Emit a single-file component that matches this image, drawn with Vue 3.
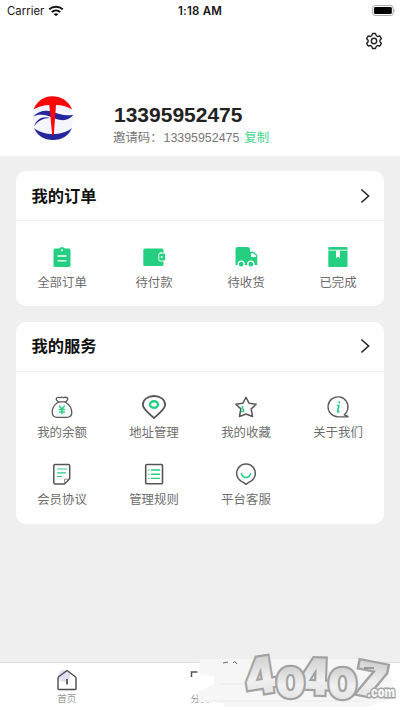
<script setup>
const orders = [
  { icon: 'list', label: '全部订单' },
  { icon: 'wallet', label: '待付款' },
  { icon: 'truck', label: '待收货' },
  { icon: 'box', label: '已完成' },
]
const services = [
  { icon: 'bag', label: '我的余额' },
  { icon: 'pin', label: '地址管理' },
  { icon: 'star', label: '我的收藏' },
  { icon: 'info', label: '关于我们' },
  { icon: 'paper', label: '会员协议' },
  { icon: 'rules', label: '管理规则' },
  { icon: 'smile', label: '平台客服' },
]
const cards = [
  { title: '我的订单', kind: 'orders', items: orders },
  { title: '我的服务', kind: 'services', items: services },
]
</script>

<template>
  <div class="screen">
    <header class="top">
      <div class="status">
        <div class="carrier">
          <span>Carrier</span>
          <svg width="16" height="12" viewBox="0 0 16 12" fill="none" stroke="#111" stroke-width="2">
            <path d="M1.2 4.4C5 .7 11 .7 14.8 4.4" />
            <path d="M3.8 7.1c2.5-2.3 5.9-2.3 8.4 0" />
            <path d="M5.8 9.1c1.3-1.1 3.1-1.1 4.4 0L8 11.3z" fill="#111" stroke="none" />
          </svg>
        </div>
        <span class="time">1:18 AM</span>
        <svg class="battery" width="24" height="12" viewBox="0 0 24 12">
          <rect x=".6" y=".5" width="20.6" height="10" rx="2.6" fill="#fff" stroke="#aaa" />
          <rect x="2" y="1.900" width="17.8" height="7.2" rx="1.4" fill="#000" />
          <path d="M22.2 3.800q1.4 1.7 0 3.4z" fill="#999" />
        </svg>
      </div>
      <div class="tools">
        <svg width="18" height="18" viewBox="0 0 18 18" fill="none" stroke="#222" stroke-width="1.4" stroke-linejoin="round">
          <path d="M7.5 1.5h3l.7 2.1 1.5.9 2.2-.5 1.5 2.6L14.900 8.200v1.600l1.500 1.600-1.500 2.600-2.200-.5-1.500.9-.7 2.100h-3l-.7-2.100-1.500-.9-2.200.5-1.500-2.600 1.500-1.600V8.200L1.600 6.600 3.100 4l2.200.5 1.500-.9z" />
          <circle cx="9" cy="9" r="2.7" />
        </svg>
      </div>
      <div class="profile">
        <svg class="avatar" width="46" height="50" viewBox="0 0 46 50">
          <ellipse cx="23" cy="26" rx="20" ry="21" fill="#f5f5ff" />
          <path d="M3 23.500c6-5.500 12-7 20-4.500 7 2.500 12 4.200 20.500 2.800C39 27.500 33 28.500 25 25.500 17 22 10 20.300 3 23.500z" fill="#26269c" />
          <path d="M4 33.500c3-8 9-10.500 16-8.500-7 .2-12 2.700-16 8.500z" fill="#26269c" />
          <path d="M4 35c10 8 28 8 38 0C38.500 43 32 47 23 47S7.500 43 4 35z" fill="#26269c" />
          <path d="M3.500 16.500C7 7.800 14 3.300 22.500 3.300S38.500 7.800 42.200 16.500C37 13.300 31 12 26 12L23.800 42h-1.600L19.300 12C14 12 8.500 13.500 3.500 16.500z" fill="#f80808" />
        </svg>
        <div class="who">
          <div class="phone">13395952475</div>
          <div class="invite"><span class="key">邀请码：</span><span class="code">13395952475</span><span class="copy">复制</span></div>
        </div>
      </div>
    </header>

    <main class="cards">
      <section v-for="card in cards" :key="card.title" class="card" :class="card.kind">
        <div class="card-head">
          <h2>{{ card.title }}</h2>
          <svg width="10" height="16" viewBox="0 0 10 16" fill="none" stroke="#222" stroke-width="1.5">
            <path d="M1.400 1.500 8.600 8l-7.200 6.500" />
          </svg>
        </div>
        <div class="grid">
          <div v-for="item in card.items" :key="item.label" class="item">
            <svg class="icon" width="24" height="24" viewBox="0 0 24 24" fill="none" stroke-linejoin="round" stroke-linecap="round">
              <template v-if="item.icon === 'list'">
                <path d="M5 3.500h4Q12 .5 15 3.500h4q1.500 0 1.500 1.500v15.500q0 1.500-1.500 1.500H5q-1.500 0-1.500-1.500V5Q3.500 3.500 5 3.500z" fill="#25cf82" />
                <circle cx="12" cy="5.300" r="1" fill="#fff" />
                <path d="M8 11h8M8 15.800h8" stroke="#fff" stroke-width="1.300" />
              </template>
              <template v-else-if="item.icon === 'wallet'">
                <rect x="1.300" y="3.500" width="20.200" height="17.500" rx="1.500" fill="#25cf82" />
                <rect x="16.800" y="8" width="6.700" height="8" rx="1.500" fill="#25cf82" stroke="#fff" />
                <circle cx="19.700" cy="12" r="1" fill="#fff" />
              </template>
              <template v-else-if="item.icon === 'truck'">
                <path d="M3.500 2h10Q16 2 16 4.500v2.200h3.500L23.300 10v10H1.500V4q0-2 2-2z" fill="#25cf82" />
                <path d="M17 8.200h2.200l2.900 2.500V12H17z" fill="#fff" />
                <circle cx="7.200" cy="19.200" r="3" fill="#25cf82" stroke="#fff" stroke-width="1.300" />
                <circle cx="16.800" cy="19.200" r="3" fill="#25cf82" stroke="#fff" stroke-width="1.300" />
              </template>
              <template v-else-if="item.icon === 'box'">
                <rect x="2.300" y="2" width="19.200" height="20" rx="1" fill="#25cf82" />
                <path d="M2 5.200h19.500" stroke="#d8f7e8" stroke-width="1" stroke-linecap="butt" />
                <path d="M10 5.500h4v7.500l-2-1.200-2 1.200z" fill="#fff" />
              </template>
              <g v-else-if="item.icon === 'bag'" stroke="#595959" stroke-width="1.300">
                <path d="M8 6.800Q5 4 7 2.700q2-.8 3.500 0 1.500-1.200 3 0 2.500-1 4 .2 1 1.200-1.500 3.900z" />
                <path d="M8.500 7C3.500 10 2 14 2.200 17.500c.2 3.500 2.500 4.800 5 4.800h9.600c3 0 5-1.500 5-4.800 0-4-2.300-8-6.800-10.500" />
                <path d="m9.500 11 2.500 3 2.500-3M12 14v5M9.500 14.500h5m-5 2.500h5" stroke="#25cf82" />
              </g>
              <g v-else-if="item.icon === 'pin'">
                <path d="M12 23C7 18.500.8 14 .8 9.500.8 4.500 6 1 12 1s11.200 3.500 11.200 8.500c0 4.500-6.200 9-11.200 13.500z" stroke="#555" stroke-width="1.800" />
                <ellipse cx="12" cy="9.500" rx="4" ry="3.200" stroke="#25cf82" stroke-width="2.400" />
              </g>
              <g v-else-if="item.icon === 'star'" stroke="#595959" stroke-width="1.500">
                <path d="m12 2.300 3.200 6 7 .9-5 4.700 1.300 7.600-6.500-2.500-6.500 2.500 1.300-7.600-5-4.700 7-.9z" />
                <path d="M8.500 11.500v1.800M9.500 14.500v2M7.500 16.500h.5" stroke="#25cf82" stroke-width="1.700" />
              </g>
              <g v-else-if="item.icon === 'info'">
                <path d="M22 21.800H12a10 10 0 1 1 9.700-7.500c-.5 2.500-1.700 4-3.500 5.500l3.800 1.500" stroke="#595959" stroke-width="1.300" />
                <path d="M11.500 10.500h1.500l-1.500 6.200h1.500" stroke="#25cf82" stroke-width="1.600" />
                <circle cx="13.300" cy="7.300" r="1.100" fill="#25cf82" />
              </g>
              <g v-else-if="item.icon === 'paper'">
                <path d="M5 2.500h13.500q1.200 0 1.200 1.200v13L14.500 22H5q-1.200 0-1.200-1.300v-17q0-1.200 1.200-1.200z" stroke="#555" stroke-width="1.500" />
                <path d="M14.500 21.500v-4.300h5" stroke="#777" stroke-width=".8" />
                <path d="M7.500 7h9M7.500 10.800h8M7.500 14.500h4" stroke="#25cf82" stroke-width="1.200" />
              </g>
              <g v-else-if="item.icon === 'rules'">
                <rect x="3.700" y="2.500" width="16.800" height="19.300" rx="1" stroke="#555" stroke-width="1.600" />
                <path d="M9.500 8h8m-8 4.200h8m-8 4.200h8M6.800 8h.1m-.1 4.200h.1m-.1 4.200h.1" stroke="#25cf82" stroke-width="1.400" />
              </g>
              <g v-else>
                <path d="m12 22.300-3-2.200A9.300 9.300 0 1 1 15 20.100z" stroke="#595959" stroke-width="1.500" />
                <path d="M7.500 11.500c1.300 5.300 7.700 5.300 9 0" stroke="#25cf82" stroke-width="1.400" />
              </g>
            </svg>
            <span>{{ item.label }}</span>
          </div>
        </div>
      </section>
    </main>

    <nav class="tabs">
      <div class="tab">
        <svg width="20" height="22" viewBox="0 0 20 22" fill="none">
          <circle cx="7" cy="7" r="6" fill="#dfe1ee" />
          <path d="M1 9q0-.8.700-1.300L10 1.500l8.300 6.200q.7.500.7 1.300v10.500q0 1-1 1H2q-1 0-1-1z" stroke="#4b4b4f" stroke-width="1.400" />
          <path d="M10 10v5.500" stroke="#333" stroke-width="1.500" />
        </svg>
        <span>首页</span>
      </div>
      <div class="tab">
        <svg width="20" height="22" viewBox="0 0 20 22" fill="none">
          <path d="M1.500 8V3h6" stroke="#555" stroke-width="1.500" />
        </svg>
        <span>分类</span>
      </div>
      <div class="tab"></div>
    </nav>

    <svg class="mark" width="220" height="70" viewBox="0 0 220 70">
      <defs>
        <linearGradient id="tone" x1="0" y1="0" x2="0" y2="1">
          <stop offset="0.200" stop-color="#d2d2d2" />
          <stop offset=".55" stop-color="#f0f0f0" />
          <stop offset="1" stop-color="#dcdcdc" />
        </linearGradient>
      </defs>
      <path d="M20 19H196L212 38 214 58 186 67H44L43 63 18 62 18 52 34 44 34 36 21 35 19 30z" fill="#f6f6f6" />
      <path d="M39 44h150M24 61h160" stroke="#ebebeb" />
      <path d="m43 23 5-1m5 1q2-3 4 1" stroke="#666" fill="none" />
      <g class="digits" fill="url(#tone)">
        <text transform="translate(67 56) rotate(-9)" textLength="32" lengthAdjust="spacingAndGlyphs">4</text>
        <text transform="translate(117 54) rotate(2)" textLength="33" lengthAdjust="spacingAndGlyphs">4</text>
        <text class="round" x="96" y="58" textLength="29" lengthAdjust="spacingAndGlyphs">0</text>
        <text class="round" x="148" y="59" textLength="29" lengthAdjust="spacingAndGlyphs">0</text>
        <text class="seven" transform="translate(173 53) rotate(11)" textLength="30" lengthAdjust="spacingAndGlyphs">7</text>
      </g>
      <text class="dotcom" x="187" y="57" textLength="28" lengthAdjust="spacingAndGlyphs">.com</text>
      <path d="M184 28h10" stroke="#555" />
    </svg>
  </div>
</template>

<style>
body { background: #efefef; overflow: hidden; }
</style>

<style scoped>
.screen {
  position: relative;
  display: flex;
  flex-direction: column;
  width: 400px;
  height: 710px;
  overflow: hidden;
  background: #efefef;
  font-family: "Liberation Sans", "Noto Sans CJK SC", sans-serif;
  color: #222;
}
svg { display: block; flex: none; }
.top { height: 155.500px; background: #fff; }
.status {
  display: grid;
  grid-template-columns: 1fr auto 1fr;
  align-items: center;
  height: 21px;
  padding: 0 4px 0 7px;
  font: 11px/20px Inter, sans-serif;
  color: #151515;
}
.carrier { display: flex; align-items: center; gap: 4px; font-size: 11.300px; }
.carrier span { letter-spacing: .050px; }
.time { font-weight: 600; font-size: 11.500px; padding-right: 3px; letter-spacing: .200px; }
.battery { justify-self: end; }
.tools { display: flex; justify-content: flex-end; padding: 11px 17px 0 0; }
.profile { display: flex; padding: 43px 0 0 30px; }
.who { padding: 9px 0 0 37px; }
.phone { padding-left: 1px; font-size: 21px; font-weight: 700; line-height: 26px; height: 27px; }
.invite { display: flex; height: 19px; line-height: 19px; font-size: 12.400px; color: #777; }
.key { width: 50.500px; white-space: nowrap; }
.copy { margin-left: 5px; color: #40d58b; }
.cards { display: flex; flex-direction: column; gap: 15.500px; padding: 15.500px 16px 0; }
.card { height: 135px; background: #fff; border-radius: 10px; overflow: hidden; }
.services { height: 202.500px; }
.card-head {
  display: flex;
  align-items: center;
  justify-content: space-between;
  height: 50px;
  padding: 0 14.500px 0 15.500px;
  border-bottom: 1px solid #f1f1f1;
  box-sizing: border-box;
}
h2 { margin: 0; font-size: 16.300px; line-height: 24px; font-weight: 700; color: #111; }
.grid { display: grid; grid-template-columns: repeat(4, 1fr); grid-auto-rows: 67px; padding-top: 23.500px; }
.item { display: flex; flex-direction: column; align-items: center; gap: 5px; font-size: 12.400px; line-height: 18px; color: #6d6d6d; }
.icon { width: 24px; height: 24px; }
.tabs {
  display: grid;
  grid-template-columns: repeat(3, 1fr);
  margin-top: auto;
  height: 48px;
  box-sizing: border-box;
  border-top: 1px solid #dedede;
  background: #fff;
}
.tab { display: flex; flex-direction: column; align-items: center; padding-top: 6px; gap: 1px; font-size: 9.500px; line-height: 14px; color: #999; }
.mark { position: absolute; left: 180px; top: 640px; }
.digits { font: 900 50px Inter, sans-serif; stroke: #a2a2a2; stroke-width: 4.500px; paint-order: stroke; }
.round { font-size: 42px; }
.seven { font-size: 46px; }
.dotcom { font: 900 14px Inter, sans-serif; fill: #f3f3f3; stroke: #a5a5a5; stroke-width: 3px; paint-order: stroke; }
</style>
